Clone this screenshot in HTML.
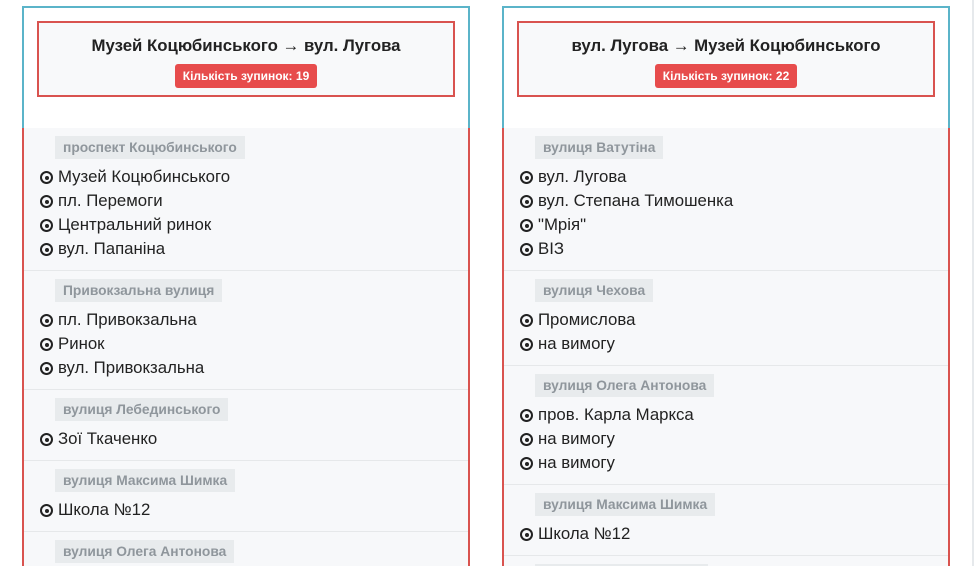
<!DOCTYPE html><html style="height:566px;overflow:hidden"><head><meta charset="utf-8"><style>
body{margin:0;width:974px;height:566px;overflow:hidden;background:#fff;font-family:"Liberation Sans",Arial,sans-serif;position:relative}
.vr{position:absolute;left:972px;top:0;width:2px;height:566px;background:#e6e9ec}
.card{position:absolute;top:6px;width:444px;height:558px;border:2px solid #5bb4c9;border-bottom:none;background:#fff}
.head{position:absolute;left:13px;top:13px;width:414px;height:72px;border:2px solid #d9534f;background:#f8f9fa;text-align:center}
.head h3{margin:13px 0 0;font-size:16.8px;font-weight:bold;color:#222}
.badge{display:inline-block;margin-top:8px;background:#e74c4c;color:#fff;font-size:12px;font-weight:bold;padding:5px 8px;border-radius:3px}
.body{position:absolute;left:-2px;top:120px;width:444px;height:438px;overflow:hidden;border:2px solid #d9534f;border-top:none;border-bottom:none;background:#f7f8fa}
.sec{padding:8px 0 9px 16px;border-bottom:1px solid #e6e8ea}
.lbl{display:block;width:fit-content;margin-left:15px;background:#e8ebed;color:#8f969c;font-size:13.8px;font-weight:bold;padding:4px 8px;height:15px;line-height:15px;margin-bottom:6px}
.it{height:24px;line-height:24px;font-size:16.8px;color:#222}
.ic{display:inline-block;width:9px;height:9px;border:2.5px solid #222;border-radius:50%;position:relative;vertical-align:-2px;margin-right:5px}
.ic:after{content:"";position:absolute;left:2.5px;top:2.5px;width:4px;height:4px;background:#222;border-radius:50%}
</style></head><body>
<div class="vr"></div>
<div class="card" style="left:22px">
<div class="head"><h3>Музей Коцюбинського → вул. Лугова</h3><span class="badge">Кількість зупинок: 19</span></div>
<div class="body">
<div class="sec"><span class="lbl">проспект Коцюбинського</span><div class="it"><i class="ic"></i>Музей Коцюбинського</div><div class="it"><i class="ic"></i>пл. Перемоги</div><div class="it"><i class="ic"></i>Центральний ринок</div><div class="it"><i class="ic"></i>вул. Папаніна</div></div>
<div class="sec"><span class="lbl">Привокзальна вулиця</span><div class="it"><i class="ic"></i>пл. Привокзальна</div><div class="it"><i class="ic"></i>Ринок</div><div class="it"><i class="ic"></i>вул. Привокзальна</div></div>
<div class="sec"><span class="lbl">вулиця Лебединського</span><div class="it"><i class="ic"></i>Зої Ткаченко</div></div>
<div class="sec"><span class="lbl">вулиця Максима Шимка</span><div class="it"><i class="ic"></i>Школа №12</div></div>
<div class="sec"><span class="lbl">вулиця Олега Антонова</span><div class="it"><i class="ic"></i>пров. Карла Маркса</div></div>
</div></div>
<div class="card" style="left:502px">
<div class="head"><h3>вул. Лугова → Музей Коцюбинського</h3><span class="badge">Кількість зупинок: 22</span></div>
<div class="body">
<div class="sec"><span class="lbl">вулиця Ватутіна</span><div class="it"><i class="ic"></i>вул. Лугова</div><div class="it"><i class="ic"></i>вул. Степана Тимошенка</div><div class="it"><i class="ic"></i>"Мрія"</div><div class="it"><i class="ic"></i>ВІЗ</div></div>
<div class="sec"><span class="lbl">вулиця Чехова</span><div class="it"><i class="ic"></i>Промислова</div><div class="it"><i class="ic"></i>на вимогу</div></div>
<div class="sec"><span class="lbl">вулиця Олега Антонова</span><div class="it"><i class="ic"></i>пров. Карла Маркса</div><div class="it"><i class="ic"></i>на вимогу</div><div class="it"><i class="ic"></i>на вимогу</div></div>
<div class="sec"><span class="lbl">вулиця Максима Шимка</span><div class="it"><i class="ic"></i>Школа №12</div></div>
<div class="sec"><span class="lbl">вулиця Лебединського</span></div>
</div></div>
</body></html>
